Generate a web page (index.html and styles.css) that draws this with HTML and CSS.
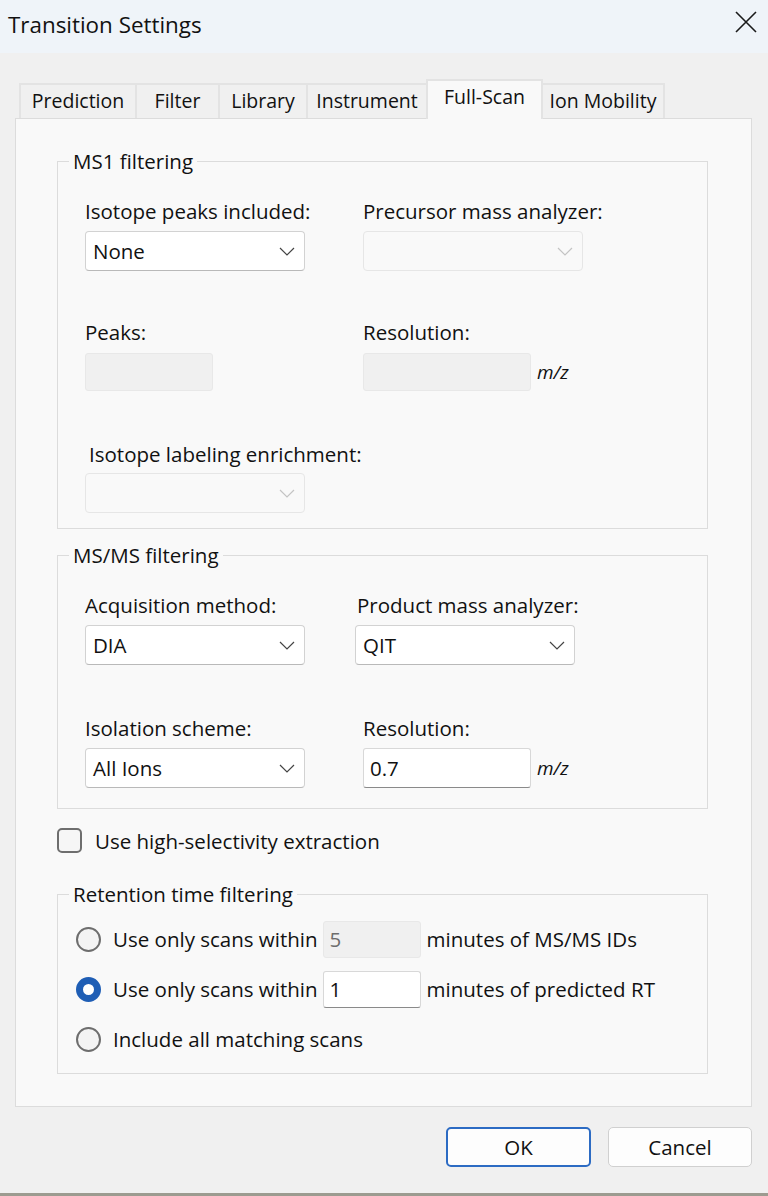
FILE: index.html
```html
<!DOCTYPE html>
<html>
<head>
<meta charset="utf-8">
<title>Transition Settings</title>
<link rel="stylesheet" href="styles.css">
</head>
<body>
<div class="window">
  <div class="titlebar">
    <span class="title">Transition Settings</span>
    <svg class="close" width="22" height="22" viewBox="0 0 22 22"><path d="M1 1 L21 21 M21 1 L1 21" stroke="#1a1a1a" stroke-width="1.6" fill="none"/></svg>
  </div>
  <div class="tabs">
    <div class="tab t-pred">Prediction</div>
    <div class="tab t-filter">Filter</div>
    <div class="tab t-lib">Library</div>
    <div class="tab t-inst">Instrument</div>
    <div class="tab t-full active">Full-Scan</div>
    <div class="tab t-ion">Ion Mobility</div>
  </div>
  <div class="panel">
    <fieldset class="group ms1">
      <legend>MS1 filtering</legend>
      <div class="inner">
        <div class="grid">
          <div class="field">
            <label>Isotope peaks included:</label>
            <div class="combo"><span>None</span><svg class="chev" width="16" height="9" viewBox="0 0 16 9"><path d="M1 1 L8 8 L15 1" stroke="#444" stroke-width="1.2" fill="none"/></svg></div>
          </div>
          <div class="field col2">
            <label>Precursor mass analyzer:</label>
            <div class="combo disabled"><span></span><svg class="chev" width="16" height="9" viewBox="0 0 16 9"><path d="M1 1 L8 8 L15 1" stroke="#c4c4c4" stroke-width="1.2" fill="none"/></svg></div>
          </div>
        </div>
        <div class="grid row2">
          <div class="field">
            <label>Peaks:</label>
            <div class="text disabled small"></div>
          </div>
          <div class="field col2">
            <label>Resolution:</label>
            <div class="withunit"><div class="text disabled res"></div><span class="unit">m/z</span></div>
          </div>
        </div>
        <div class="grid row3">
          <div class="field">
            <label class="shift">Isotope labeling enrichment:</label>
            <div class="combo disabled"><span></span><svg class="chev" width="16" height="9" viewBox="0 0 16 9"><path d="M1 1 L8 8 L15 1" stroke="#c4c4c4" stroke-width="1.2" fill="none"/></svg></div>
          </div>
        </div>
      </div>
    </fieldset>

    <fieldset class="group msms">
      <legend>MS/MS filtering</legend>
      <div class="inner">
        <div class="grid">
          <div class="field">
            <label>Acquisition method:</label>
            <div class="combo"><span>DIA</span><svg class="chev" width="16" height="9" viewBox="0 0 16 9"><path d="M1 1 L8 8 L15 1" stroke="#444" stroke-width="1.2" fill="none"/></svg></div>
          </div>
          <div class="field col2 product">
            <label>Product mass analyzer:</label>
            <div class="combo"><span>QIT</span><svg class="chev" width="16" height="9" viewBox="0 0 16 9"><path d="M1 1 L8 8 L15 1" stroke="#444" stroke-width="1.2" fill="none"/></svg></div>
          </div>
        </div>
        <div class="grid row2b">
          <div class="field">
            <label>Isolation scheme:</label>
            <div class="combo"><span>All Ions</span><svg class="chev" width="16" height="9" viewBox="0 0 16 9"><path d="M1 1 L8 8 L15 1" stroke="#444" stroke-width="1.2" fill="none"/></svg></div>
          </div>
          <div class="field col2">
            <label>Resolution:</label>
            <div class="withunit"><div class="text res tall">0.7</div><span class="unit">m/z</span></div>
          </div>
        </div>
      </div>
    </fieldset>

    <div class="check-row">
      <span class="checkbox"></span>
      <span>Use high-selectivity extraction</span>
    </div>

    <fieldset class="group rt">
      <legend>Retention time filtering</legend>
      <div class="inner rt-inner">
        <div class="radio-row">
          <span class="radio"></span>
          <span class="rlabel">Use only scans within</span>
          <div class="text disabled mini">5</div>
          <span>minutes of MS/MS IDs</span>
        </div>
        <div class="radio-row">
          <span class="radio checked"></span>
          <span class="rlabel">Use only scans within</span>
          <div class="text mini">1</div>
          <span>minutes of predicted RT</span>
        </div>
        <div class="radio-row">
          <span class="radio"></span>
          <span class="rlabel">Include all matching scans</span>
        </div>
      </div>
    </fieldset>
  </div>
  <div class="buttons">
    <button class="btn default">OK</button>
    <button class="btn">Cancel</button>
  </div>
</div>
<div class="desktop"></div>
</body>
</html>
```
FILE: styles.css
```css
html, body {
  margin: 0;
  padding: 0;
}
body {
  width: 768px;
  height: 1196px;
  overflow: hidden;
  background: #9c9b90;
  font-family: "Open Sans", "Noto Sans", sans-serif;
  font-size: 20.5px;
  color: #111;
}
.window {
  background: #f0f0f0;
  height: 1193px;
  overflow: hidden;
}
.titlebar {
  height: 53px;
  background: #eff4f9;
  display: flex;
  align-items: center;
  justify-content: space-between;
  padding: 0 11px 0 8px;
  box-sizing: border-box;
}
.title {
  font-size: 22.4px;
  color: #111;
  margin-top: -4px;
}
.close {
  margin-top: -10px;
}
.tabs {
  display: flex;
  align-items: flex-end;
  margin: 26px 0 0 19px;
  height: 39px;
  position: relative;
  z-index: 2;
  font-size: 19.5px;
}
.tab {
  box-sizing: border-box;
  height: 35px;
  border: 2px solid #e3e3e3;
  border-bottom: none;
  border-right: none;
  background: #f0f0f0;
  display: flex;
  align-items: center;
  justify-content: center;
  line-height: 24px;
  padding-bottom: 2px;
}
.tab.t-ion { border-right: 2px solid #e3e3e3; }
.t-pred { width: 116px; }
.t-filter { width: 83px; }
.t-lib { width: 88px; }
.t-inst { width: 120px; }
.t-full { width: 117px; }
.t-ion { width: 122px; }
.tab.active {
  height: 40px;
  background: #f9f9f9;
  border: 2px solid #e3e3e3;
  border-bottom: none;
  margin-bottom: -1px;
  align-items: flex-start;
  padding: 4px 0 0;
}
.tab.active + .tab { border-left: none; }
.panel {
  margin-left: 15px;
  width: 737px;
  box-sizing: border-box;
  background: #f9f9f9;
  border: 1px solid #dcdcdc;
  padding: 30px 43px 32px 41px;
  position: relative;
  z-index: 1;
}
.group {
  margin: 0;
  padding: 0;
  border: 1px solid #dcdcdc;
  min-width: 0;
}
.group legend {
  margin-left: 11px;
  padding: 0 4px;
  line-height: 24px;
}
.inner {
  padding: 26px 0 15px 27px;
}
.grid {
  display: grid;
  grid-template-columns: 278px 1fr;
}
.field {
  display: flex;
  flex-direction: column;
  align-items: flex-start;
}
.field label {
  line-height: 24px;
  margin-bottom: 8px;
  white-space: nowrap;
}
.field label.shift { margin-left: 4px; margin-bottom: 7px; }
.product { margin-left: -8px; }
.product label { margin-left: 2px; }
.row2 { margin-top: 49px; }
.row2 label { margin-bottom: 9px; }
.row3 { margin-top: 51px; }
.msms { margin-top: 14px; }
.msms .inner { padding-bottom: 20px; }
.row2b { margin-top: 51px; }
.combo {
  box-sizing: border-box;
  width: 220px;
  height: 40px;
  background: #fff;
  border: 1px solid #d2d2d2;
  border-bottom-color: #b9b9b9;
  border-radius: 4px;
  display: flex;
  align-items: center;
  justify-content: space-between;
  padding: 0 9px 0 7px;
}
.combo.disabled {
  background: #f9f9f9;
  border: 1px solid #e6e6e6;
}
.chev { margin-top: 1px; }
.text {
  box-sizing: border-box;
  height: 38px;
  background: #fff;
  border: 1px solid #d8d8d8;
  border-bottom: 1px solid #8a8a8a;
  border-radius: 3px;
  display: flex;
  align-items: center;
  padding-left: 6px;
}
.text.disabled {
  background: #f0f0f0;
  border: 1px solid #e8e8e8;
  color: #6d6d6d;
}
.text.small { width: 128px; }
.text.res { width: 168px; }
.text.tall { height: 40px; }
.withunit {
  display: flex;
  align-items: center;
}
.unit {
  font-style: italic;
  font-size: 19px;
  margin-left: 6px;
}
.check-row {
  display: flex;
  align-items: center;
  margin-top: 19px;
  line-height: 24px;
}
.checkbox {
  box-sizing: border-box;
  width: 25px;
  height: 25px;
  border: 2px solid #6e6e6e;
  border-radius: 5px;
  background: #f6f6f6;
  margin-right: 13px;
}
.rt { margin-top: 29px; }
.rt-inner {
  padding: 8px 0 9px 18px;
}
.radio-row {
  display: flex;
  align-items: center;
  height: 50px;
  white-space: nowrap;
}
.radio {
  box-sizing: border-box;
  width: 25px;
  height: 25px;
  border-radius: 50%;
  border: 2px solid #6e6e6e;
  background: #f3f3f3;
  margin-right: 12px;
}
.radio.checked {
  border: 7px solid #1f5eb5;
  background: #fff;
}
.rlabel { margin-right: 5px; }
.text.mini {
  width: 98px;
  height: 37px;
  margin-right: 6px;
}
.buttons {
  display: flex;
  justify-content: flex-end;
  gap: 17px;
  margin-top: 20px;
  padding-right: 16px;
}
.btn {
  box-sizing: border-box;
  width: 144px;
  height: 40px;
  background: #fdfdfd;
  border: 1px solid #d0d0d0;
  border-radius: 5px;
  font-family: inherit;
  font-size: 20.5px;
  color: #111;
}
.btn.default {
  width: 145px;
  border: 2px solid #2c6bc3;
}
.desktop {
  height: 3px;
  background: #9c9b90;
}
```
